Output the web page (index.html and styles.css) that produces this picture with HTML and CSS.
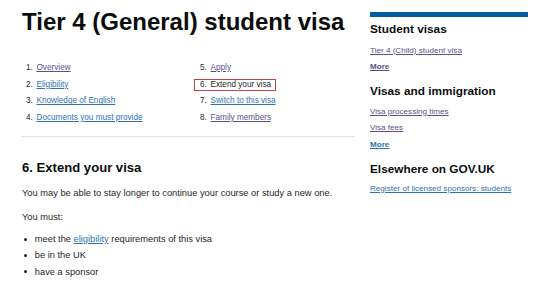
FILE: index.html
```html
<!DOCTYPE html>
<html lang="en">
<head>
<meta charset="utf-8">
<title>Tier 4 (General) student visa</title>
<link rel="stylesheet" href="styles.css">
</head>
<body>
<div class="page">
  <main class="main">
    <h1 class="title">Tier 4 (General) student visa</h1>
    <nav class="contents">
      <ol class="contents-list">
        <li class="contents-item"><span class="num">1.</span><a class="link visited" href="#">Overview</a></li>
        <li class="contents-item"><span class="num">2.</span><a class="link" href="#">Eligibility</a></li>
        <li class="contents-item"><span class="num">3.</span><a class="link" href="#">Knowledge of English</a></li>
        <li class="contents-item"><span class="num">4.</span><a class="link" href="#">Documents you must provide</a></li>
        <li class="contents-item"><span class="num">5.</span><a class="link visited" href="#">Apply</a></li>
        <li class="contents-item"><span class="current"><span class="num">6.</span><span>Extend your visa</span></span></li>
        <li class="contents-item"><span class="num">7.</span><a class="link" href="#">Switch to this visa</a></li>
        <li class="contents-item"><span class="num">8.</span><a class="link visited" href="#">Family members</a></li>
      </ol>
    </nav>
    <hr class="divider">
    <h2 class="section-title">6. Extend your visa</h2>
    <p class="body-text">You may be able to stay longer to continue your course or study a new one.</p>
    <p class="body-text must">You must:</p>
    <ul class="bullets">
      <li class="bullet">meet the&nbsp;<a class="link" href="#">eligibility</a>&nbsp;requirements of this visa</li>
      <li class="bullet">be in the UK</li>
      <li class="bullet">have a sponsor</li>
    </ul>
  </main>
  <aside class="sidebar">
    <div class="bar"></div>
    <h3 class="side-heading first">Student visas</h3>
    <ul class="side-list first-list">
      <li class="side-item"><a class="link visited" href="#">Tier 4 (Child) student visa</a></li>
      <li class="side-item"><a class="link visited more" href="#">More</a></li>
    </ul>
    <h3 class="side-heading">Visas and immigration</h3>
    <ul class="side-list">
      <li class="side-item"><a class="link visited" href="#">Visa processing times</a></li>
      <li class="side-item"><a class="link visited" href="#">Visa fees</a></li>
      <li class="side-item"><a class="link more" href="#">More</a></li>
    </ul>
    <h3 class="side-heading">Elsewhere on GOV.UK</h3>
    <ul class="side-list">
      <li class="side-item"><a class="link" href="#">Register of licensed sponsors: students</a></li>
    </ul>
  </aside>
</div>
</body>
</html>
```
FILE: styles.css
```css
html, body {
  margin: 0;
  padding: 0;
  background: #ffffff;
}

body {
  font-family: "Liberation Sans", Arial, sans-serif;
  color: #1f1f1f;
}

.page {
  display: flex;
  gap: 15px;
  padding-left: 22px;
}

.main {
  width: 333px;
  flex: none;
}

.title {
  margin: 8px 0 0;
  font-size: 24px;
  line-height: 28px;
  font-weight: 700;
  color: #0b0c0c;
}

.contents {
  margin-top: 23.5px;
}

.contents-list {
  list-style: none;
  margin: 0;
  padding: 0 0 0 4px;
  display: grid;
  grid-template-columns: 174px auto;
  grid-template-rows: repeat(4, 16.7px);
  grid-auto-flow: column;
  font-size: 8.2px;
}

.contents-item {
  display: flex;
  align-items: center;
  line-height: 10px;
  color: #1f1f1f;
}

.num {
  width: 10.5px;
  flex: none;
}

.current {
  display: flex;
  align-items: center;
  height: 12px;
  box-sizing: border-box;
  margin-left: -6px;
  margin-top: 1px;
  padding: 0 4px 0 5px;
  border: 1px solid #c4434b;
}

.link {
  color: #2e74b5;
  text-decoration: underline;
  text-decoration-thickness: 1px;
  text-underline-offset: 1px;
}

.link.visited {
  color: #5d4f8c;
}

.more {
  font-weight: 700;
}

.divider {
  margin: 10px 0 0 -1px;
  width: 334px;
  height: 0;
  border: 0;
  border-top: 1px solid #e2e2e2;
}

.section-title {
  margin: 21.5px 0 0;
  font-size: 13.1px;
  line-height: 18px;
  font-weight: 700;
  color: #0b0c0c;
}

.body-text {
  margin: 7.8px 0 0;
  font-size: 9.3px;
  line-height: 16px;
}

.body-text.must {
  margin-top: 8px;
}

.bullets {
  list-style: none;
  margin: 6.6px 0 0;
  padding: 0;
  font-size: 9.3px;
}

.bullet {
  display: flex;
  align-items: center;
  line-height: 16.2px;
}

.bullet::before {
  content: "";
  width: 3px;
  height: 3px;
  border-radius: 50%;
  background: #1f1f1f;
  flex: none;
  margin-left: 1.5px;
  margin-right: 8.3px;
}

.sidebar {
  width: 158px;
  flex: none;
  padding-top: 12px;
}

.bar {
  height: 5px;
  background: #005ea5;
}

.side-heading {
  margin: 7.2px 0 0;
  font-size: 11.8px;
  line-height: 16px;
  font-weight: 700;
  color: #0b0c0c;
}

.side-heading.first {
  margin-top: 4.4px;
}

.side-list {
  list-style: none;
  margin: 4.3px 0 0;
  padding: 0;
  font-size: 8.1px;
}

.side-list.first-list {
  margin-top: 5.5px;
}

.side-item {
  line-height: 16.6px;
}
```
